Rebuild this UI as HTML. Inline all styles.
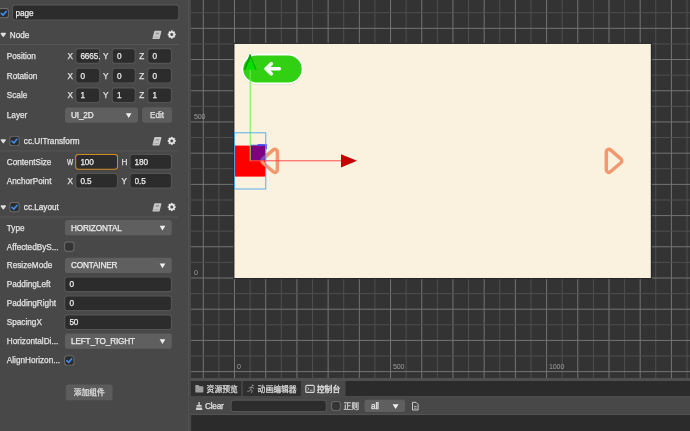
<!DOCTYPE html>
<html lang="zh">
<head>
<meta charset="utf-8">
<title>Cocos Creator</title>
<style>
*{box-sizing:border-box;margin:0;padding:0}
html,body{width:690px;height:431px;overflow:hidden;background:#484848}
body{position:relative;font-family:"Liberation Sans","Noto Sans CJK SC",sans-serif;font-size:8.2px;color:#dcdcdc;line-height:12px}
#bg{position:absolute;left:0;top:0;width:690px;height:431px}
#fg{position:absolute;left:0;top:0;width:690px;height:431px;will-change:transform;-webkit-text-stroke:0.25px currentColor}
#fg div{position:absolute;white-space:nowrap;height:12px}
.t{color:#e2e2e2}
.th{color:#e6e6e6}
.ti{color:#ececec;overflow:hidden;letter-spacing:-0.1px}
.ts{color:#ececec;letter-spacing:-0.15px}
.tc{color:#dcdcdc;font-size:7.8px}
.gM{stroke:#747474;stroke-width:1}
.gm{stroke:#4f4f4f;stroke-width:1}
.tick{font-size:7.1px;color:#9c9c9c;line-height:10px;-webkit-text-stroke:0;letter-spacing:-0.15px}
</style>
</head>
<body>
<svg id="bg" width="690" height="431" viewBox="0 0 690 431">
<rect x="0" y="0" width="188" height="431" fill="#484848"/>
<rect x="187.8" y="0" width="3.2" height="431" fill="#494949"/>
<rect x="-1.4" y="8" width="10.2" height="10.2" rx="2.6" fill="#6e6e6e"/>
<rect x="-0.5" y="8.9" width="8.4" height="8.4" rx="2" fill="#2c2c2c"/>
<path d="M1.2 13.3 L3.1 15.1 L6.1 11.4" fill="none" stroke="#3b8ff7" stroke-width="1.6" stroke-linecap="round" stroke-linejoin="round"/>
<rect x="12" y="4.3" width="167.3" height="16.2" rx="3" fill="#545454"/>
<rect x="13.1" y="5.4" width="165.1" height="14" rx="2.2" fill="#2c2c2c"/>
<path d="M1.3 33.5 H5.3 L3.3 36.3 Z" fill="#dedede" stroke="#dedede" stroke-width="1.3" stroke-linejoin="round"/>
<g transform="translate(152.4 30.7)"><path d="M2.7 0 H8.3 Q9.2 0 9 0.9 L7.3 7.5 Q7.1 8.4 6.2 8.4 H0.8 Q-0.1 8.4 0.1 7.5 L1.8 0.9 Q2 0 2.7 0 Z" fill="#c8c8c8"/><path d="M3.5 2.1 H6.7 L6.4 3.5 H3.2 Z" fill="#8e8e8e"/><path d="M1.3 6.5 H6.3" stroke="#9c9c9c" stroke-width="0.7"/></g>
<path d="M175.65 33.88 L175.65 35.12 L174.81 35.29 L174.47 36.11 L174.95 36.82 L174.07 37.7 L173.36 37.22 L172.54 37.56 L172.37 38.4 L171.13 38.4 L170.96 37.56 L170.14 37.22 L169.43 37.7 L168.55 36.82 L169.03 36.11 L168.69 35.29 L167.85 35.12 L167.85 33.88 L168.69 33.71 L169.03 32.89 L168.55 32.18 L169.43 31.3 L170.14 31.78 L170.96 31.44 L171.13 30.6 L172.37 30.6 L172.54 31.44 L173.36 31.78 L174.07 31.3 L174.95 32.18 L174.47 32.89 L174.81 33.71 Z M173.41 34.5 A1.66 1.66 0 1 0 170.09 34.5 A1.66 1.66 0 1 0 173.41 34.5 Z" fill="#ececec" fill-rule="evenodd" stroke="#ececec" stroke-width="0.3" stroke-linejoin="round"/>
<rect x="0" y="44" width="179" height="1" fill="#565656"/>
<rect x="75.2" y="48.1" width="25" height="15.8" rx="3" fill="#545454"/>
<rect x="76.3" y="49.2" width="22.8" height="13.6" rx="2.2" fill="#2c2c2c"/>
<rect x="111.7" y="48.1" width="24.1" height="15.8" rx="3" fill="#545454"/>
<rect x="112.8" y="49.2" width="21.9" height="13.6" rx="2.2" fill="#2c2c2c"/>
<rect x="147.2" y="48.1" width="24.8" height="15.8" rx="3" fill="#545454"/>
<rect x="148.3" y="49.2" width="22.6" height="13.6" rx="2.2" fill="#2c2c2c"/>
<rect x="75.2" y="67.7" width="25" height="15.8" rx="3" fill="#545454"/>
<rect x="76.3" y="68.8" width="22.8" height="13.6" rx="2.2" fill="#2c2c2c"/>
<rect x="111.7" y="67.7" width="24.1" height="15.8" rx="3" fill="#545454"/>
<rect x="112.8" y="68.8" width="21.9" height="13.6" rx="2.2" fill="#2c2c2c"/>
<rect x="147.2" y="67.7" width="24.8" height="15.8" rx="3" fill="#545454"/>
<rect x="148.3" y="68.8" width="22.6" height="13.6" rx="2.2" fill="#2c2c2c"/>
<rect x="75.2" y="87.3" width="25" height="15.8" rx="3" fill="#545454"/>
<rect x="76.3" y="88.4" width="22.8" height="13.6" rx="2.2" fill="#2c2c2c"/>
<rect x="111.7" y="87.3" width="24.1" height="15.8" rx="3" fill="#545454"/>
<rect x="112.8" y="88.4" width="21.9" height="13.6" rx="2.2" fill="#2c2c2c"/>
<rect x="147.2" y="87.3" width="24.8" height="15.8" rx="3" fill="#545454"/>
<rect x="148.3" y="88.4" width="22.6" height="13.6" rx="2.2" fill="#2c2c2c"/>
<rect x="65" y="107.5" width="73" height="15.2" rx="2.6" fill="#5f5f5f"/>
<path d="M125.9 113.2 H131.5 L128.7 117.9 Z" fill="#f0f0f0"/>
<rect x="142.1" y="107.3" width="30" height="15.4" rx="2.6" fill="#5c5c5c"/>
<path d="M1.3 139.9 H5.3 L3.3 142.7 Z" fill="#dedede" stroke="#dedede" stroke-width="1.3" stroke-linejoin="round"/>
<rect x="9.4" y="135.9" width="10.2" height="10.2" rx="2.6" fill="#6e6e6e"/>
<rect x="10.3" y="136.8" width="8.4" height="8.4" rx="2" fill="#2c2c2c"/>
<path d="M12 141.2 L13.9 143 L16.9 139.3" fill="none" stroke="#3b8ff7" stroke-width="1.6" stroke-linecap="round" stroke-linejoin="round"/>
<g transform="translate(152.4 137.1)"><path d="M2.7 0 H8.3 Q9.2 0 9 0.9 L7.3 7.5 Q7.1 8.4 6.2 8.4 H0.8 Q-0.1 8.4 0.1 7.5 L1.8 0.9 Q2 0 2.7 0 Z" fill="#c8c8c8"/><path d="M3.5 2.1 H6.7 L6.4 3.5 H3.2 Z" fill="#8e8e8e"/><path d="M1.3 6.5 H6.3" stroke="#9c9c9c" stroke-width="0.7"/></g>
<path d="M175.65 140.28 L175.65 141.52 L174.81 141.69 L174.47 142.51 L174.95 143.22 L174.07 144.1 L173.36 143.62 L172.54 143.96 L172.37 144.8 L171.13 144.8 L170.96 143.96 L170.14 143.62 L169.43 144.1 L168.55 143.22 L169.03 142.51 L168.69 141.69 L167.85 141.52 L167.85 140.28 L168.69 140.11 L169.03 139.29 L168.55 138.58 L169.43 137.7 L170.14 138.18 L170.96 137.84 L171.13 137 L172.37 137 L172.54 137.84 L173.36 138.18 L174.07 137.7 L174.95 138.58 L174.47 139.29 L174.81 140.11 Z M173.41 140.9 A1.66 1.66 0 1 0 170.09 140.9 A1.66 1.66 0 1 0 173.41 140.9 Z" fill="#ececec" fill-rule="evenodd" stroke="#ececec" stroke-width="0.3" stroke-linejoin="round"/>
<rect x="0" y="150.4" width="179" height="1" fill="#565656"/>
<rect x="75.2" y="154" width="42.8" height="15.8" rx="3" fill="#d18b25"/>
<rect x="76.2" y="155" width="40.8" height="13.8" rx="2.3" fill="#2c2c2c"/>
<rect x="129.4" y="154" width="42.6" height="15.8" rx="3" fill="#545454"/>
<rect x="130.5" y="155.1" width="40.4" height="13.6" rx="2.2" fill="#2c2c2c"/>
<rect x="75.2" y="172.9" width="42.8" height="15.8" rx="3" fill="#545454"/>
<rect x="76.3" y="174" width="40.6" height="13.6" rx="2.2" fill="#2c2c2c"/>
<rect x="129.4" y="172.9" width="42.6" height="15.8" rx="3" fill="#545454"/>
<rect x="130.5" y="174" width="40.4" height="13.6" rx="2.2" fill="#2c2c2c"/>
<path d="M1.3 206 H5.3 L3.3 208.8 Z" fill="#dedede" stroke="#dedede" stroke-width="1.3" stroke-linejoin="round"/>
<rect x="9.4" y="202" width="10.2" height="10.2" rx="2.6" fill="#6e6e6e"/>
<rect x="10.3" y="202.9" width="8.4" height="8.4" rx="2" fill="#2c2c2c"/>
<path d="M12 207.3 L13.9 209.1 L16.9 205.4" fill="none" stroke="#3b8ff7" stroke-width="1.6" stroke-linecap="round" stroke-linejoin="round"/>
<g transform="translate(152.4 203.2)"><path d="M2.7 0 H8.3 Q9.2 0 9 0.9 L7.3 7.5 Q7.1 8.4 6.2 8.4 H0.8 Q-0.1 8.4 0.1 7.5 L1.8 0.9 Q2 0 2.7 0 Z" fill="#c8c8c8"/><path d="M3.5 2.1 H6.7 L6.4 3.5 H3.2 Z" fill="#8e8e8e"/><path d="M1.3 6.5 H6.3" stroke="#9c9c9c" stroke-width="0.7"/></g>
<path d="M175.65 206.38 L175.65 207.62 L174.81 207.79 L174.47 208.61 L174.95 209.32 L174.07 210.2 L173.36 209.72 L172.54 210.06 L172.37 210.9 L171.13 210.9 L170.96 210.06 L170.14 209.72 L169.43 210.2 L168.55 209.32 L169.03 208.61 L168.69 207.79 L167.85 207.62 L167.85 206.38 L168.69 206.21 L169.03 205.39 L168.55 204.68 L169.43 203.8 L170.14 204.28 L170.96 203.94 L171.13 203.1 L172.37 203.1 L172.54 203.94 L173.36 204.28 L174.07 203.8 L174.95 204.68 L174.47 205.39 L174.81 206.21 Z M173.41 207 A1.66 1.66 0 1 0 170.09 207 A1.66 1.66 0 1 0 173.41 207 Z" fill="#ececec" fill-rule="evenodd" stroke="#ececec" stroke-width="0.3" stroke-linejoin="round"/>
<rect x="0" y="216.5" width="179" height="1" fill="#565656"/>
<rect x="65" y="220.05" width="106.8" height="15.2" rx="2.6" fill="#5f5f5f"/>
<path d="M159.7 225.75 H165.3 L162.5 230.45 Z" fill="#f0f0f0"/>
<rect x="64.2" y="241.5" width="10.2" height="10.2" rx="2.6" fill="#6e6e6e"/>
<rect x="65.1" y="242.4" width="8.4" height="8.4" rx="2" fill="#343434"/>
<rect x="65" y="257.8" width="106.8" height="15.2" rx="2.6" fill="#5f5f5f"/>
<path d="M159.7 263.5 H165.3 L162.5 268.2 Z" fill="#f0f0f0"/>
<rect x="64.2" y="276.4" width="107.8" height="15.8" rx="3" fill="#545454"/>
<rect x="65.3" y="277.5" width="105.6" height="13.6" rx="2.2" fill="#2c2c2c"/>
<rect x="64.2" y="295.4" width="107.8" height="15.8" rx="3" fill="#545454"/>
<rect x="65.3" y="296.5" width="105.6" height="13.6" rx="2.2" fill="#2c2c2c"/>
<rect x="64.2" y="314.3" width="107.8" height="15.8" rx="3" fill="#545454"/>
<rect x="65.3" y="315.4" width="105.6" height="13.6" rx="2.2" fill="#2c2c2c"/>
<rect x="65" y="333.6" width="106.8" height="15.2" rx="2.6" fill="#5f5f5f"/>
<path d="M159.7 339.3 H165.3 L162.5 344 Z" fill="#f0f0f0"/>
<rect x="64.2" y="355.4" width="10.2" height="10.2" rx="2.6" fill="#6e6e6e"/>
<rect x="65.1" y="356.3" width="8.4" height="8.4" rx="2" fill="#2c2c2c"/>
<path d="M66.8 360.7 L68.7 362.5 L71.7 358.8" fill="none" stroke="#3b8ff7" stroke-width="1.6" stroke-linecap="round" stroke-linejoin="round"/>
<rect x="65.8" y="384.5" width="46.8" height="15.8" rx="2.6" fill="#5c5c5c"/>
<rect x="191" y="0" width="499" height="378" fill="#333"/>
<line class="gM" x1="203.29" y1="0" x2="203.29" y2="378"/>
<line class="gm" x1="218.90" y1="0" x2="218.90" y2="378"/>
<line class="gM" x1="234.50" y1="0" x2="234.50" y2="378"/>
<line class="gm" x1="250.10" y1="0" x2="250.10" y2="378"/>
<line class="gM" x1="265.71" y1="0" x2="265.71" y2="378"/>
<line class="gm" x1="281.31" y1="0" x2="281.31" y2="378"/>
<line class="gM" x1="296.92" y1="0" x2="296.92" y2="378"/>
<line class="gm" x1="312.52" y1="0" x2="312.52" y2="378"/>
<line class="gM" x1="328.12" y1="0" x2="328.12" y2="378"/>
<line class="gm" x1="343.73" y1="0" x2="343.73" y2="378"/>
<line class="gM" x1="359.33" y1="0" x2="359.33" y2="378"/>
<line class="gm" x1="374.94" y1="0" x2="374.94" y2="378"/>
<line class="gM" x1="390.54" y1="0" x2="390.54" y2="378"/>
<line class="gm" x1="406.14" y1="0" x2="406.14" y2="378"/>
<line class="gM" x1="421.75" y1="0" x2="421.75" y2="378"/>
<line class="gm" x1="437.35" y1="0" x2="437.35" y2="378"/>
<line class="gM" x1="452.96" y1="0" x2="452.96" y2="378"/>
<line class="gm" x1="468.56" y1="0" x2="468.56" y2="378"/>
<line class="gM" x1="484.16" y1="0" x2="484.16" y2="378"/>
<line class="gm" x1="499.77" y1="0" x2="499.77" y2="378"/>
<line class="gM" x1="515.37" y1="0" x2="515.37" y2="378"/>
<line class="gm" x1="530.98" y1="0" x2="530.98" y2="378"/>
<line class="gM" x1="546.58" y1="0" x2="546.58" y2="378"/>
<line class="gm" x1="562.18" y1="0" x2="562.18" y2="378"/>
<line class="gM" x1="577.79" y1="0" x2="577.79" y2="378"/>
<line class="gm" x1="593.39" y1="0" x2="593.39" y2="378"/>
<line class="gM" x1="609.00" y1="0" x2="609.00" y2="378"/>
<line class="gm" x1="624.60" y1="0" x2="624.60" y2="378"/>
<line class="gM" x1="640.20" y1="0" x2="640.20" y2="378"/>
<line class="gm" x1="655.81" y1="0" x2="655.81" y2="378"/>
<line class="gM" x1="671.41" y1="0" x2="671.41" y2="378"/>
<line class="gm" x1="687.02" y1="0" x2="687.02" y2="378"/>
<line class="gM" x1="191" y1="371.62" x2="690" y2="371.62"/>
<line class="gm" x1="191" y1="356.02" x2="690" y2="356.02"/>
<line class="gM" x1="191" y1="340.42" x2="690" y2="340.42"/>
<line class="gm" x1="191" y1="324.81" x2="690" y2="324.81"/>
<line class="gM" x1="191" y1="309.21" x2="690" y2="309.21"/>
<line class="gm" x1="191" y1="293.60" x2="690" y2="293.60"/>
<line class="gM" x1="191" y1="278.00" x2="690" y2="278.00"/>
<line class="gm" x1="191" y1="262.40" x2="690" y2="262.40"/>
<line class="gM" x1="191" y1="246.79" x2="690" y2="246.79"/>
<line class="gm" x1="191" y1="231.19" x2="690" y2="231.19"/>
<line class="gM" x1="191" y1="215.58" x2="690" y2="215.58"/>
<line class="gm" x1="191" y1="199.98" x2="690" y2="199.98"/>
<line class="gM" x1="191" y1="184.38" x2="690" y2="184.38"/>
<line class="gm" x1="191" y1="168.77" x2="690" y2="168.77"/>
<line class="gM" x1="191" y1="153.17" x2="690" y2="153.17"/>
<line class="gm" x1="191" y1="137.56" x2="690" y2="137.56"/>
<line class="gM" x1="191" y1="121.96" x2="690" y2="121.96"/>
<line class="gm" x1="191" y1="106.36" x2="690" y2="106.36"/>
<line class="gM" x1="191" y1="90.75" x2="690" y2="90.75"/>
<line class="gm" x1="191" y1="75.15" x2="690" y2="75.15"/>
<line class="gM" x1="191" y1="59.54" x2="690" y2="59.54"/>
<line class="gm" x1="191" y1="43.94" x2="690" y2="43.94"/>
<line class="gM" x1="191" y1="28.34" x2="690" y2="28.34"/>
<line class="gm" x1="191" y1="12.73" x2="690" y2="12.73"/>
<rect x="234" y="43.44" width="417.31" height="235.06" fill="none" stroke="#262626" stroke-width="1.2"/>
<rect x="234.5" y="43.94" width="416.31" height="234.06" fill="#fbf1df"/>
<rect x="241.8" y="54.6" width="61.4" height="30.4" rx="15.2" fill="#000" fill-opacity="0.1"/>
<rect x="241.6" y="53.8" width="61.8" height="30.4" rx="15.2" fill="#ffffff"/>
<rect x="243.3" y="55.5" width="58.4" height="27" rx="13.5" fill="#32d013"/>
<path d="M279.4 68.7 H266.4 M271.3 63.7 L266 68.7 L271.3 73.7" fill="none" stroke="#fff" stroke-width="3.6" stroke-linecap="round" stroke-linejoin="round"/>
<rect x="234.5" y="145.6" width="30.9" height="31" fill="#ff0000"/>
<path d="M273.27 149.95 A2.5 2.5 0 0 1 277.40 151.85 L277.40 169.85 A2.5 2.5 0 0 1 273.27 171.75 L262.80 162.75 A2.5 2.5 0 0 1 262.80 158.95 Z" fill="none" stroke="#f1986f" stroke-width="3.5"/>
<path d="M610.43 149.95 A2.5 2.5 0 0 0 606.30 151.85 L606.30 169.85 A2.5 2.5 0 0 0 610.43 171.75 L620.90 162.75 A2.5 2.5 0 0 0 620.90 158.95 Z" fill="none" stroke="#f1986f" stroke-width="3.5"/>
<rect x="250" y="144.7" width="15.6" height="15.9" fill="#0000ff" fill-opacity="0.5"/>
<path d="M257.6 144.9 H266.1 V149.2" fill="none" stroke="#2a3cff" stroke-width="1.3"/>
<line x1="250.2" y1="160.8" x2="341" y2="160.8" stroke="#ff4a4a" stroke-width="1"/>
<path d="M341 154.2 L357 160.8 L341 167.5 Z" fill="#c40000"/>
<line x1="250.2" y1="160.8" x2="250.2" y2="68" stroke="#6cf05a" stroke-width="1"/>
<path d="M243.5 69.8 L250 54 L256.6 69.8 Z" fill="#04e004"/>
<path d="M243.5 69.8 L250 54 L251 56.4 L245.4 69.8 Z" fill="#0c9c0c"/>
<path d="M256.6 69.8 L250 54 L249.6 55 L255.6 69.8 Z" fill="#0c9c0c"/>
<rect x="234.6" y="132.8" width="31.2" height="56.2" fill="none" stroke="#4aa8ec" stroke-width="0.9"/>
<rect x="189.2" y="378" width="501" height="53" fill="#484848"/>
<rect x="191" y="378" width="499" height="3" fill="#4f4f4f"/>
<rect x="191" y="396" width="499" height="1" fill="#505050"/>
<rect x="191" y="414.1" width="499" height="1" fill="#545454"/>
<rect x="191.2" y="381" width="498.8" height="15.1" fill="#2b2b2b"/>
<rect x="191.2" y="381" width="49.9" height="15.1" fill="#2f2f2f"/>
<rect x="241.1" y="381" width="1.9" height="15.1" fill="#444"/>
<rect x="243" y="381" width="58" height="15.1" fill="#2f2f2f"/>
<rect x="301" y="381" width="44.6" height="15.1" fill="#484848"/>
<rect x="191.2" y="415.1" width="498.8" height="16" fill="#2b2b2b"/>
<path d="M195.3 385.6 Q195.3 385 195.9 385 H198.4 L199.6 386.3 H202.8 Q203.4 386.3 203.4 386.9 V392 Q203.4 392.6 202.8 392.6 H195.9 Q195.3 392.6 195.3 392 Z" fill="#9e9e9e"/>
<circle cx="252.7" cy="385.5" r="0.95" fill="#858585"/>
<path d="M249 388 L251.4 386.9 L253.8 388.4 M251.6 387 L250.5 389.7 L252.3 390.7 L251.6 392.6 M250.5 389.7 L249.5 391.1 L247.6 391.3" fill="none" stroke="#858585" stroke-width="1" stroke-linecap="round" stroke-linejoin="round"/>
<rect x="305.8" y="385.4" width="8.4" height="7" rx="1" fill="none" stroke="#d4d4d4" stroke-width="1.1"/>
<path d="M307.6 387.6 L309 388.8 L307.6 390 M310 390.2 H312.4" fill="none" stroke="#d4d4d4" stroke-width="0.8"/>
<path d="M198.4 402 H199.8 V405 H201.6 V406.8 H196.6 V405 H198.4 Z M196.2 407.4 H202 L202.4 410 H195.8 Z" fill="#d0d0d0"/>
<rect x="230.6" y="399.6" width="96.3" height="12.6" rx="3" fill="#545454"/>
<rect x="231.7" y="400.7" width="94.1" height="10.4" rx="2.2" fill="#2c2c2c"/>
<rect x="331.2" y="401.2" width="9.6" height="9.6" rx="2.6" fill="#6e6e6e"/>
<rect x="332.1" y="402.1" width="7.8" height="7.8" rx="2" fill="#343434"/>
<rect x="364.6" y="399.8" width="40.5" height="12.3" rx="2.6" fill="#5f5f5f"/>
<path d="M392.6 404.2 H398.6 L395.6 409 Z" fill="#f0f0f0"/>
<path d="M412.5 402.3 H416 L418.1 404.4 V410 H412.5 Z" fill="none" stroke="#d8d8d8" stroke-width="0.9" stroke-linejoin="round"/>
<path d="M414 406.4 H416.6 M414 408.2 H416.6" stroke="#d8d8d8" stroke-width="0.7"/>
<rect x="187.9" y="0" width="1.3" height="431" fill="#525252"/>
</svg>
<div id="fg">
<div class="ti" style="left:15.6px;top:7.8px;width:163.6px;">page</div>
<div class="th" style="left:9.8px;top:29.8px;">Node</div>
<div class="t" style="left:6.8px;top:50.8px;">Position</div>
<div class="t" style="left:67.6px;top:50.8px;">X</div>
<div class="ti" style="left:80.4px;top:50.8px;width:19.7px;">6665.</div>
<div class="t" style="left:103.1px;top:50.8px;">Y</div>
<div class="ti" style="left:116.9px;top:50.8px;width:18.8px;">0</div>
<div class="t" style="left:139.2px;top:50.8px;">Z</div>
<div class="ti" style="left:152.4px;top:50.8px;width:19.5px;">0</div>
<div class="t" style="left:6.8px;top:70.8px;">Rotation</div>
<div class="t" style="left:67.6px;top:70.8px;">X</div>
<div class="ti" style="left:80.4px;top:70.8px;width:19.7px;">0</div>
<div class="t" style="left:103.1px;top:70.8px;">Y</div>
<div class="ti" style="left:116.9px;top:70.8px;width:18.8px;">0</div>
<div class="t" style="left:139.2px;top:70.8px;">Z</div>
<div class="ti" style="left:152.4px;top:70.8px;width:19.5px;">0</div>
<div class="t" style="left:6.8px;top:89.8px;">Scale</div>
<div class="t" style="left:67.6px;top:89.8px;">X</div>
<div class="ti" style="left:80.4px;top:89.8px;width:19.7px;">1</div>
<div class="t" style="left:103.1px;top:89.8px;">Y</div>
<div class="ti" style="left:116.9px;top:89.8px;width:18.8px;">1</div>
<div class="t" style="left:139.2px;top:89.8px;">Z</div>
<div class="ti" style="left:152.4px;top:89.8px;width:19.5px;">1</div>
<div class="t" style="left:6.8px;top:109.8px;">Layer</div>
<div class="ts" style="left:71px;top:109.8px;">UI_2D</div>
<div class="t" style="left:142.1px;width:30px;text-align:center;top:109.8px;color:#e0e0e0;">Edit</div>
<div class="th" style="left:23.8px;top:135.8px;">cc.UITransform</div>
<div class="t" style="left:6.8px;top:156.8px;">ContentSize</div>
<div class="t" style="left:67.4px;top:156.8px;letter-spacing:0;transform:scaleX(0.8);transform-origin:0 0;">W</div>
<div class="ti" style="left:80.4px;top:156.8px;width:37.5px;">100</div>
<div class="t" style="left:121.4px;top:156.8px;">H</div>
<div class="ti" style="left:134.6px;top:156.8px;width:37.3px;">180</div>
<div class="t" style="left:6.8px;top:175.8px;">AnchorPoint</div>
<div class="t" style="left:67.6px;top:175.8px;">X</div>
<div class="ti" style="left:80.4px;top:175.8px;width:37.5px;">0.5</div>
<div class="t" style="left:121.4px;top:175.8px;">Y</div>
<div class="ti" style="left:134.6px;top:175.8px;width:37.3px;">0.5</div>
<div class="th" style="left:23.8px;top:201.8px;">cc.Layout</div>
<div class="t" style="left:6.8px;top:222.8px;">Type</div>
<div class="ts" style="left:71px;top:222.8px;">HORIZONTAL</div>
<div class="t" style="left:6.8px;top:241.8px;">AffectedByS...</div>
<div class="t" style="left:6.8px;top:259.8px;">ResizeMode</div>
<div class="ts" style="left:71px;top:259.8px;">CONTAINER</div>
<div class="t" style="left:6.8px;top:278.8px;">PaddingLeft</div>
<div class="ti" style="left:69.4px;top:278.8px;width:102.5px;">0</div>
<div class="t" style="left:6.8px;top:297.8px;">PaddingRight</div>
<div class="ti" style="left:69.4px;top:297.8px;width:102.5px;">0</div>
<div class="t" style="left:6.8px;top:316.8px;">SpacingX</div>
<div class="ti" style="left:69.4px;top:316.8px;width:102.5px;">50</div>
<div class="t" style="left:6.8px;top:335.8px;">HorizontalDi...</div>
<div class="ts" style="left:71px;top:335.8px;">LEFT_TO_RIGHT</div>
<div class="t" style="left:6.8px;top:354.8px;">AlignHorizon...</div>
<div class="t" style="left:65.8px;width:46.8px;text-align:center;top:386.8px;color:#e0e0e0;font-size:7.7px;">添加组件</div>
<div class="tick" style="left:193.9px;top:112.3px">500</div>
<div class="tick" style="left:193.9px;top:268.3px">0</div>
<div class="tick" style="left:237px;top:362.3px">0</div>
<div class="tick" style="left:393px;top:362.3px">500</div>
<div class="tick" style="left:549px;top:362.3px">1000</div>
<div class="tc" style="left:206.6px;top:383.8px;">资源预览</div>
<div class="tc" style="left:257.6px;top:383.8px;">动画编辑器</div>
<div class="tc" style="left:316.8px;top:383.8px;color:#ececec;">控制台</div>
<div class="t" style="left:205px;top:400.8px;letter-spacing:-0.2px;">Clear</div>
<div class="tc" style="left:343.4px;top:400.8px;">正则</div>
<div class="ts" style="left:371px;top:400.8px;">all</div>
</div>
</body>
</html>
